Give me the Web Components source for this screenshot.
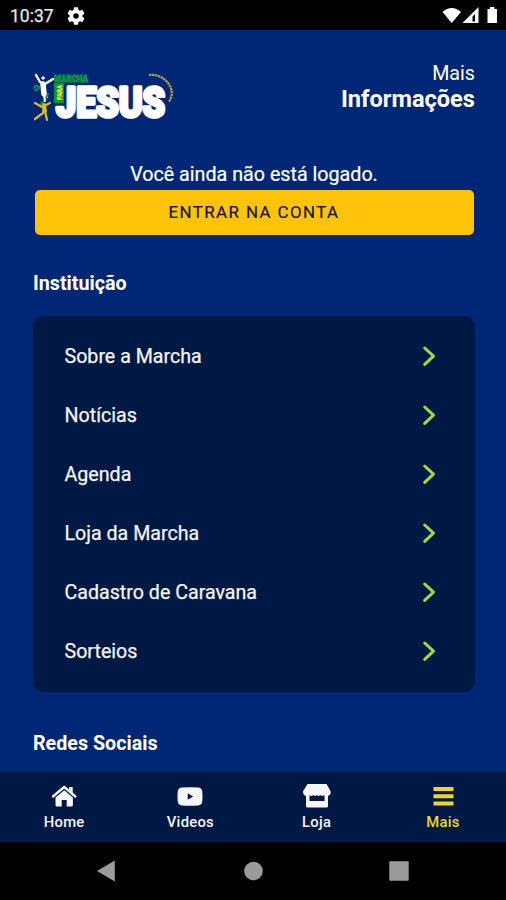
<!DOCTYPE html>
<html lang="pt-BR">
<head>
<meta charset="UTF-8">
<title>Marcha para Jesus</title>
<style>
  body {
    margin: 0;
    background: #000;
    font-family: Roboto, sans-serif;
    color: #fff;
  }
</style>
</head>
<body>
<app-screen>
  <status-bar slot="top" time="10:37"></status-bar>
  <page-header>
    <march-logo slot="logo"></march-logo>
    <span slot="over">Mais</span>
    <span slot="title">Informações</span>
  </page-header>
  <login-prompt>
    Você ainda não está logado.
    <span slot="action">ENTRAR NA CONTA</span>
  </login-prompt>
  <menu-section>
    <span slot="heading">Instituição</span>
    <menu-item>Sobre a Marcha</menu-item>
    <menu-item>Notícias</menu-item>
    <menu-item>Agenda</menu-item>
    <menu-item>Loja da Marcha</menu-item>
    <menu-item>Cadastro de Caravana</menu-item>
    <menu-item>Sorteios</menu-item>
  </menu-section>
  <section-title style="margin-top: 38px">Redes Sociais</section-title>
  <tab-bar slot="bottom">
    <tab-item icon="home">Home</tab-item>
    <tab-item icon="video">Videos</tab-item>
    <tab-item icon="store">Loja</tab-item>
    <tab-item icon="menu" active>Mais</tab-item>
  </tab-bar>
  <system-nav slot="bottom"></system-nav>
</app-screen>

<script>
// Shared base: every component renders its template into an open shadow root
class BaseElement extends HTMLElement {
  constructor() {
    super();
    this.attachShadow({ mode: 'open' });
  }

  connectedCallback() {
    this.shadowRoot.innerHTML = this.template();
  }
}

class AppScreen extends BaseElement {
  template() {
    return `
      <style>
        :host {
          display: flex;
          flex-direction: column;
          height: 900px;
          overflow: hidden;
        }
        main {
          flex: 1;
          min-height: 0;
          overflow: hidden;
          padding: 0 31px 0 33px;
          background: #002776;
        }
      </style>
      <slot name="top"></slot>
      <main><slot></slot></main>
      <slot name="bottom"></slot>
    `;
  }
}

class StatusBar extends BaseElement {
  template() {
    return `
      <style>
        :host {
          display: flex;
          align-items: center;
          height: 30px;
          box-sizing: border-box;
          padding: 2px 6px 0 10px;
          background: #000;
          color: #e4e4e4;
          font-size: 17.5px;
          -webkit-text-stroke: .25px #e4e4e4;
        }
        .gear { margin-left: 13px; }
        .right { margin-left: auto; }
        svg { display: block; fill: #fff; }
      </style>
      <span>${this.getAttribute('time')}</span>
      <svg class="gear" width="18" height="18" viewBox="2 2 20 20">
        <path d="M19.14 12.94c.04-.3.06-.61.06-.94s-.02-.64-.07-.94l2.03-1.58a.49.49 0 0 0 .12-.61l-1.92-3.32a.49.49 0 0 0-.59-.22l-2.39.96a7 7 0 0 0-1.62-.94l-.36-2.54a.48.48 0 0 0-.48-.41h-3.84a.47.47 0 0 0-.47.41l-.36 2.54c-.59.24-1.13.57-1.62.94l-2.39-.96a.48.48 0 0 0-.59.22L2.74 8.87a.47.47 0 0 0 .12.61l2.03 1.58c-.05.3-.09.63-.09.94s.02.64.07.94l-2.03 1.58a.49.49 0 0 0-.12.61l1.92 3.32c.12.22.37.29.59.22l2.39-.96c.5.38 1.03.7 1.62.94l.36 2.54c.05.24.24.41.48.41h3.84c.24 0 .44-.17.47-.41l.36-2.54a7 7 0 0 0 1.62-.94l2.39.96c.22.08.47 0 .59-.22l1.92-3.32a.47.47 0 0 0-.12-.61zM12 15.1a3.1 3.1 0 1 1 0-6.2 3.1 3.1 0 0 1 0 6.2z"/>
      </svg>
      <svg class="right" width="58" height="18" viewBox="0 0 58 18">
        <path d="M.5 5Q9.700 -3 19 5L9.700 16z"/>
        <path fill-rule="evenodd" d="M20.500 16L36.500 0v16zM33 7l-2.500 2.500v5H33z"/>
        <path d="M45.500 2H48V0h4.500v2H55v14H45.500z"/>
      </svg>
    `;
  }
}

class MarchLogo extends BaseElement {
  template() {
    return `
      <style>
        :host { display: block; }
        svg { display: block; overflow: visible; font-family: Roboto, sans-serif; font-weight: 900; }
      </style>
      <svg width="146" height="62" viewBox="0 0 146 62">
        <!-- dancers -->
        <g fill="none" stroke-linecap="round" stroke-linejoin="round">
          <path d="M4 5l4 7 5 2 8-5M11 14l-1 8 5 5" stroke="#fff" stroke-width="2.300"/>
          <path d="M11 14l1 10" stroke="#fff" stroke-width="5.500"/>
          <circle cx="11" cy="8" r="1.200" fill="#fff" stroke="#fff"/>
          <path d="M2 18q2-4 5-1 0 3-4 3M16 24l-3 6-4 4" stroke="#079447" stroke-width="1.800"/>
          <path d="M12 26l1 5" stroke="#fff" stroke-width="2"/>
          <path d="M3 33l7 4 8-4M12 36l-1 7-8 6M13 41l2 9" stroke="#d9bd2c" stroke-width="2.200"/>
          <path d="M12 35l1 6" stroke="#d9bd2c" stroke-width="4"/>
        </g>
        <text x="22" y="11.500" font-size="8.500" fill="#079447" stroke="#079447" stroke-width=".9" textLength="34" lengthAdjust="spacingAndGlyphs">MARCHA</text>
        <text x="24" y="46.500" font-size="42" fill="#fff" stroke="#fff" stroke-width="3.600" stroke-linejoin="round" textLength="109" lengthAdjust="spacingAndGlyphs">JESUS</text>
        <rect x="22" y="13" width="10" height="20" fill="#07913d"/>
        <text transform="translate(29.500 30) rotate(-90)" font-size="7" fill="#e6e12c" stroke="#e6e12c" stroke-width=".3" textLength="15" lengthAdjust="spacingAndGlyphs">PARA</text>
        <path d="M117 5Q129 4 136 13T137 32" fill="none" stroke="#a99d55" stroke-width="2.300" stroke-dasharray="2.500 .5"/>
      </svg>
    `;
  }
}

class PageHeader extends BaseElement {
  template() {
    return `
      <style>
        :host {
          display: flex;
          justify-content: space-between;
          height: 133px;
          box-sizing: border-box;
          padding-top: 31px;
        }
        .logo { padding-top: 9px; margin-left: -1px; }
        .text { display: flex; flex-direction: column; align-items: flex-end; padding-top: 1px; }
        .over { font-size: 19.700px; line-height: 24px; }
        .title { font-size: 23.600px; line-height: 26px; font-weight: 700; }
      </style>
      <div class="logo"><slot name="logo"></slot></div>
      <div class="text">
        <div class="over"><slot name="over"></slot></div>
        <div class="title"><slot name="title"></slot></div>
      </div>
    `;
  }
}

class LoginPrompt extends BaseElement {
  template() {
    return `
      <style>
        :host { display: block; text-align: center; font-size: 19.700px; line-height: 24px; -webkit-text-stroke: .2px; }
        button {
          display: block;
          width: 439px;
          height: 45px;
          margin: 3px 0 .5px 1.500px;
          padding: 0 0 1px;
          border: 0;
          border-radius: 5px;
          background: #ffc409;
          color: #15130a;
          font: 400 16.900px Roboto, sans-serif;
          letter-spacing: 1.4px;
        }
      </style>
      <slot></slot>
      <button><slot name="action"></slot></button>
    `;
  }
}

class SectionTitle extends BaseElement {
  template() {
    return `
      <style>
        :host { display: block; font-size: 19.700px; line-height: 28px; font-weight: 700; }
      </style>
      <slot></slot>
    `;
  }
}

class MenuSection extends BaseElement {
  template() {
    return `
      <style>
        :host { display: block; margin-top: 34.500px; }
        .card {
          margin-top: 18px;
          padding: 11px 39px 11px 31.500px;
          border-radius: 11px;
          background: #001944;
        }
      </style>
      <section-title><slot name="heading"></slot></section-title>
      <div class="card"><slot></slot></div>
    `;
  }
}

class MenuItem extends BaseElement {
  template() {
    return `
      <style>
        :host {
          display: flex;
          align-items: center;
          justify-content: space-between;
          height: 59px;
          font-size: 19.650px;
          color: #f4f4f4;
          -webkit-text-stroke: .25px #f4f4f4;
        }
        svg { display: block; fill: none; stroke: #9bdc46; stroke-width: 3; stroke-linecap: round; stroke-linejoin: round; }
      </style>
      <span><slot></slot></span>
      <svg width="14" height="22" viewBox="0 0 14 22"><path d="M2.700 3l8.800 8.200-8.800 8.200"/></svg>
    `;
  }
}

const tabIcons = {
  home: `
    <path d="M3 13.500L14.200 4l11.200 9.500" fill="none" stroke="currentColor" stroke-width="2.300" stroke-linejoin="round" stroke-linecap="round"/>
    <path d="M19 4h3.700v7L19 8z"/>
    <path d="M5.500 14.500l8.700-7.300 8.700 7.300v7.500q0 1.500-1.500 1.500h-4.700v-6.500h-5v6.500H7q-1.500 0-1.500-1.500z"/>`,
  video: `
    <path fill-rule="evenodd" d="M6 4.500q8-.6 16 0 4 .3 4.300 4 .4 5 0 10-.3 3.600-4.300 4-8 .6-16 0-4-.4-4.300-4-.4-5 0-10 .3-3.700 4.300-4zm5.700 5.700v6.600l5.500-3.300z"/>`,
  store: `
    <path d="M4.500 1h19L27.500 8q1 4-3 5-2 .3-3.500-1-2 2-3.700 0-1.700 2-3.500 0-1.700 2-3.500 0-2 2-3.800 0-1.500 1.300-3.300 1-3.700-1-3-5z"/>
    <path fill-rule="evenodd" d="M3 12h22v11q0 1.500-1.500 1.500h-19Q3 24.500 3 23zM6.500 12v6h15v-6z"/>`,
  menu: `
    <rect x="4.500" y="4" width="20" height="4" rx=".5"/>
    <rect x="4.500" y="11.200" width="20" height="4" rx=".5"/>
    <rect x="4.500" y="18.400" width="20" height="4" rx=".5"/>`,
};

class TabItem extends BaseElement {
  template() {
    return `
      <style>
        :host {
          flex: 1;
          display: flex;
          flex-direction: column;
          align-items: center;
          padding-top: 11px;
          font-size: 14.800px;
          font-weight: 500;
          line-height: 18px;
          letter-spacing: .25px;
          color: #f5f5fa;
        }
        :host([active]) { color: #f2d522; }
        svg { display: block; fill: currentColor; margin-bottom: 4px; }
      </style>
      <svg width="28" height="26" viewBox="0 0 28 26">${tabIcons[this.getAttribute('icon')]}</svg>
      <span><slot></slot></span>
    `;
  }
}

class TabBar extends BaseElement {
  template() {
    return `
      <style>
        :host { display: flex; height: 70px; box-sizing: border-box; padding-left: 1px; background: #001944; }
      </style>
      <slot></slot>
    `;
  }
}

class SystemNav extends BaseElement {
  template() {
    return `
      <style>
        :host {
          display: flex;
          align-items: center;
          justify-content: space-between;
          height: 58px;
          box-sizing: border-box;
          padding: 0 97px 0 96px;
          background: #000;
        }
        svg { display: block; fill: #9b9b9b; }
      </style>
      <svg width="20" height="22" viewBox="0 0 20 22"><path d="M18.800 .5v21L1 11z"/></svg>
      <svg width="20" height="20" viewBox="0 0 20 20"><circle cx="10.500" cy="10" r="9.300"/></svg>
      <svg width="20" height="20" viewBox="0 0 20 20"><rect x=".3" y=".3" width="19.400" height="19.400" rx="1"/></svg>
    `;
  }
}

customElements.define('app-screen', AppScreen);
customElements.define('status-bar', StatusBar);
customElements.define('march-logo', MarchLogo);
customElements.define('page-header', PageHeader);
customElements.define('login-prompt', LoginPrompt);
customElements.define('section-title', SectionTitle);
customElements.define('menu-section', MenuSection);
customElements.define('menu-item', MenuItem);
customElements.define('tab-item', TabItem);
customElements.define('tab-bar', TabBar);
customElements.define('system-nav', SystemNav);
</script>
</body>
</html>
